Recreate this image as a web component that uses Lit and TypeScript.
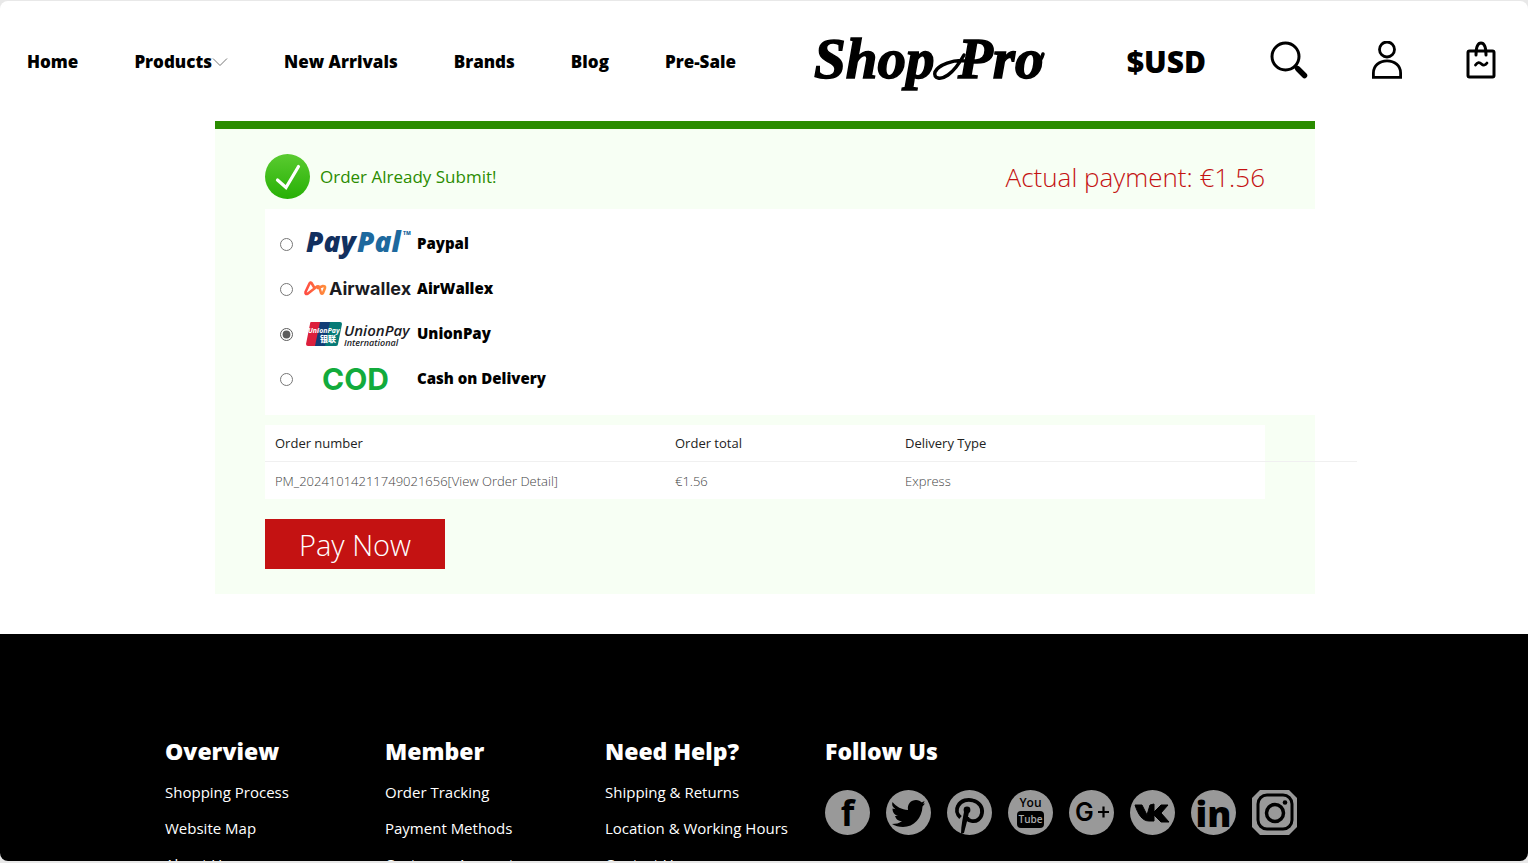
import { LitElement, html, css, svg } from "lit";
import { customElement, state } from "lit/decorators.js";

const chevron = html`<svg class="chevron" width="16" height="10" viewBox="0 0 16 10" aria-hidden="true"><path d="M1 1.5 8 8.5 15 1.5" fill="none" stroke="#777"/></svg>`;

const logo = html`<svg width="234" height="80" viewBox="0 -4 234 80" role="img" aria-label="Shop Pro">
  <g font-family="'Liberation Serif', serif" font-weight="700" font-style="italic" font-size="57" stroke="#000" stroke-width="1.500">
    <text x="2" y="52">Shop</text>
    <text x="146" y="52">Pro</text>
  </g>
  <path d="M154 35C142 33 126 39 123 46c-2 7 6 8 13 3 7-5 11-11 16-20" fill="none" stroke="#000" stroke-width="3.500" stroke-linecap="round"/>
  <path d="M224 37c4-1 6-5 7-9" fill="none" stroke="#000" stroke-width="3.500" stroke-linecap="round"/>
</svg>`;

const searchIcon = html`<svg width="38" height="38" viewBox="0 0 38 38"><circle cx="15.500" cy="15.500" r="13.500" fill="none" stroke="#000" stroke-width="3"/><path d="m25 25 3 3" stroke="#000" stroke-width="4"/><path d="m28 28 6.500 6.500" stroke="#000" stroke-width="5.500" stroke-linecap="round"/></svg>`;
const userIcon = html`<svg width="30" height="38" viewBox="0 0 30 38"><circle cx="15" cy="8.500" r="7.500" fill="none" stroke="#000" stroke-width="2.800"/><path d="M1.400 36.300V32C1.400 24.500 7.500 19.800 15 19.800S28.600 24.500 28.600 32v4.300z" fill="none" stroke="#000" stroke-width="2.800"/></svg>`;
const bagIcon = html`<svg width="30" height="38" viewBox="0 0 30 38"><rect x="2" y="10" width="26" height="26" rx="1.500" fill="none" stroke="#000" stroke-width="3"/><path d="M10 14C10 6 12 2 15 2s5 4 5 12" fill="none" stroke="#000" stroke-width="3" stroke-linecap="round"/><path d="M9.500 24c2-3 4-3 6-1s4 1 5.500-1" fill="none" stroke="#000" stroke-width="2.800" stroke-linecap="round"/></svg>`;

const payPal = html`<svg width="110" height="45" viewBox="0 -4 110 45" aria-hidden="true">
  <g font-family="'Open Sans', sans-serif" font-weight="800" font-style="italic" font-size="28">
    <text x="4" y="26" fill="#12305f">Pay</text><text x="55" y="26" fill="#1d699e">Pal</text>
  </g>
  <text x="101" y="9" font-family="'Open Sans', sans-serif" font-size="5" fill="#1d699e">TM</text>
</svg>`;
const airwallex = html`<svg width="110" height="45" viewBox="0 -4 110 45" aria-hidden="true">
  <defs><linearGradient id="aw"><stop offset="0" stop-color="#ff4b42"/><stop offset="1" stop-color="#ff8e3c"/></linearGradient></defs>
  <path d="M12.500 17 9.500 12Q8.500 11 7.500 12.500L3.500 21Q3 24 6 22.500L15 15.500Q17 14.500 17.500 17L19 22Q20 23.500 21 22L23 17Q23.500 15 21 15L16 17" fill="none" stroke="url(#aw)" stroke-width="2.600" stroke-linejoin="round" stroke-linecap="round"/>
  <text x="27" y="24" font-family="Inter, sans-serif" font-weight="700" font-size="18" fill="#1b1b1f">Airwallex</text>
</svg>`;
const unionPay = html`<svg width="110" height="45" viewBox="0 -4 110 45" aria-hidden="true">
  <path d="M9 6h13l-5 24H6q-2 0-2-2L8 8q0-2 1-2z" fill="#dc1f3c"/>
  <path d="M18 6h12l-5 24H13z" fill="#123d76"/>
  <path d="M28 6h10q2 0 2 2l-4 20q0 2-2 2H23z" fill="#067a76"/>
  <text x="6" y="17" font-family="'Noto Sans', sans-serif" font-weight="700" font-style="italic" font-size="7" fill="#fff">UnionPay</text>
  <text x="18" y="26" font-family="'Noto Sans CJK SC', sans-serif" font-weight="900" font-size="8" fill="#fff">银联</text>
  <g font-family="'Open Sans', sans-serif" font-style="italic" font-weight="600" fill="#1b1b1f">
    <text x="42" y="20" font-size="15">UnionPay</text>
    <text x="42" y="30" font-size="9">International</text>
  </g>
</svg>`;
const cod = html`<svg width="110" height="45" viewBox="0 -4 110 45" aria-hidden="true"><text x="20" y="29" font-family="Inter, sans-serif" font-weight="700" font-size="30" fill="#12ab3c">COD</text></svg>`;

const checkIcon = html`<svg width="45" height="45" viewBox="0 0 45 45" aria-hidden="true">
  <defs><linearGradient id="ok" x2="0" y2="1"><stop offset="0" stop-color="#5acb30"/><stop offset="1" stop-color="#27b005"/></linearGradient></defs>
  <circle cx="22.500" cy="22.500" r="22.500" fill="url(#ok)"/>
  <path d="M12.500 26 21 33.500 33.500 12.500" fill="none" stroke="#fff" stroke-width="3.200" stroke-linecap="round"/>
</svg>`;

const disc = svg`<circle cx="22.500" cy="22.500" r="22.500" fill="#999"/>`;
const social = [
  { name: "Facebook", art: svg`${disc}<text x="22.500" y="36" text-anchor="middle" font-family="'Open Sans', sans-serif" font-weight="700" font-size="35">f</text>` },
  { name: "Twitter", art: svg`${disc}<path d="M6.500 12c4 5 9 7.500 15.500 8-1-6 3-10 8-10 2.500 0 4.500 1 5.500 2.300 1 0 2-.8 3-1.300-.3 1.400-.7 2-1.500 2.700l2-.2-2.500 3C36 28 28 37 17 37c-4 0-8-1-11-3 4 0 7-.6 10-3-4 0-6-2-7-5h3c-4-1.500-5.500-4-5.500-7.500l3 .8C6.500 17 5.500 15 6.500 12z"/>` },
  { name: "Pinterest", art: svg`${disc}<path d="M13.500 27.500C9.500 24 9 19.500 11 16c3-6 10-7 15-5.500 6 1.500 10 6.500 9 12.500-1 6-5.500 9-10.500 8-3-.5-4.500-2.500-4.500-4" fill="none" stroke="#000" stroke-width="3.800"/><path d="M18 17h4c1 3-2 15-5 26l-3 1c0-9 2-17 4-27z"/><circle cx="20" cy="20" r="3.400"/>` },
  { name: "YouTube", art: svg`${disc}<g font-family="'Open Sans', sans-serif" font-weight="600" text-anchor="middle"><text x="22.500" y="17" font-size="12">You</text><rect x="9" y="21" width="27" height="17" rx="4"/><text x="22.500" y="33" font-size="10" fill="#aaa">Tube</text></g>` },
  { name: "Google Plus", art: svg`${disc}<text x="6" y="31" font-family="Inter, sans-serif" font-weight="600" font-size="25">G</text><path d="M29 22h11M34.500 16.500v11" stroke="#000" stroke-width="2.200"/>` },
  { name: "VK", art: svg`${disc}<path d="M5 15h7l5 10 3-10 4-1v8l7-7h7l-7 8 8 9h-8l-7-7v6h-5C12 31 8 24 5 15z" stroke="#000" stroke-linejoin="round"/>` },
  { name: "LinkedIn", art: svg`${disc}<text x="22.500" y="37" text-anchor="middle" font-family="'Open Sans', sans-serif" font-weight="800" font-size="36">in</text>` },
  { name: "Instagram", art: svg`<path d="M8 0h29l8 8v29l-8 8H8l-8-8V8z" fill="#999"/><rect x="6" y="5" width="34" height="34" rx="9" fill="none" stroke="#000" stroke-width="3"/><circle cx="23" cy="23" r="8.500" fill="none" stroke="#000" stroke-width="3.500"/><circle cx="33" cy="12.500" r="2.300"/>` },
];

const methods = [
  { id: "paypal", label: "Paypal", mark: payPal },
  { id: "airwallex", label: "AirWallex", mark: airwallex },
  { id: "unionpay", label: "UnionPay", mark: unionPay },
  { id: "cod", label: "Cash on Delivery", mark: cod },
];

const footerColumns = [
  { title: "Overview", links: ["Shopping Process", "Website Map", "About Us"] },
  { title: "Member", links: ["Order Tracking", "Payment Methods", "Customer Account"] },
  { title: "Need Help?", links: ["Shipping & Returns", "Location & Working Hours", "Contact Us"] },
];

@customElement("app-root")
export class AppRoot extends LitElement {
  @state() private method = "unionpay";

  static styles = css`
    :host {
      display: block;
      box-sizing: border-box;
      height: 100vh;
      padding: 1px 0 2px;
      background: #e8e8e8;
      font-family: "Open Sans", "Noto Sans", sans-serif;
      font-weight: 400;
      color: #000;
    }
    * { box-sizing: border-box; }
    a { color: inherit; text-decoration: none; }
    svg { display: block; }
    .page { height: 100%; overflow: hidden; border-radius: 8px; background: #fff; }
    .header { display: flex; align-items: center; height: 120px; padding: 2px 32px 0 27px; }
    .nav { display: flex; gap: 56px; font-size: 17px; font-weight: 800; line-height: 24px; white-space: nowrap; }
    .nav a { display: flex; align-items: center; }
    .logo { margin-left: 76px; }
    .tools { display: flex; flex: 1; align-items: center; justify-content: flex-end; gap: 64px; }
    .tools svg { margin-bottom: 4px; }
    .tool { padding: 0; border: 0; background: none; font: inherit; color: inherit; }
    .currency { font-size: 30px; font-weight: 800; line-height: 40px; }
    .content { padding-left: 2px; }
    .panel { width: 1100px; max-width: 100%; margin: 0 auto 40px; padding: 25px 0 25px 50px; border-top: 8px solid #2a8c00; background: #f7fff4; }
    .status { display: flex; align-items: center; gap: 10px; padding-right: 50px; }
    .done { flex: 1; margin: 0; font-size: 17px; font-weight: 400; color: #2a8c00; }
    .due { margin: 0; font-size: 26px; font-weight: 350; line-height: 40px; color: #c41212; }
    .methods { margin: 10px 0; padding: 13px 15px; border: 0; background: #fff; }
    .method { display: flex; align-items: center; height: 45px; font-size: 15px; font-weight: 800; }
    .method input { width: 13px; height: 13px; margin: 0 9px 0 0; accent-color: #5c5c5c; }
    .method span { margin-left: 5px; padding-bottom: 4px; }
    .order { width: 1000px; margin-bottom: 20px; background: #fff; font-size: 13px; }
    .order table { width: 1092px; border-collapse: collapse; table-layout: fixed; text-align: left; }
    .order th, .order td { padding: 1px 10px 0; font-weight: 400; color: #222; }
    .order th { height: 36px; border-bottom: 1px solid #f0f0f0; }
    .order td { height: 38px; font-weight: 350; color: #444; }
    .order .number { width: 400px; }
    .order .total { width: 230px; }
    .pay { display: block; width: 180px; height: 50px; padding: 1px 0 0; border: 0; background: #c41212; color: #fff; font: inherit; font-size: 29px; font-weight: 350; }
    .footer { min-height: 400px; padding: 99px 0 40px 2px; background: #000; color: #fff; }
    .columns { display: grid; grid-template-columns: 220px 220px 220px 1fr; width: 1200px; max-width: 100%; margin: 0 auto; }
    .columns h2 { margin: 0 0 5px; font-size: 23px; font-weight: 800; line-height: 36px; }
    .links { margin: 0; padding: 0; list-style: none; font-size: 15px; line-height: 36px; white-space: nowrap; }
    .social { display: flex; gap: 16px; padding-top: 16px; }
  `;

  render() {
    return html`<div class="page">
      <header class="header">
        <nav class="nav" aria-label="Main">
          <a href="#home">Home</a>
          <a href="#products">Products${chevron}</a>
          <a href="#new">New Arrivals</a>
          <a href="#brands">Brands</a>
          <a href="#blog">Blog</a>
          <a href="#presale">Pre-Sale</a>
        </nav>
        <a class="logo" href="#home">${logo}</a>
        <div class="tools">
          <button class="tool currency">$USD</button>
          <button class="tool" aria-label="Search">${searchIcon}</button>
          <a href="#account" aria-label="Account">${userIcon}</a>
          <a href="#cart" aria-label="Cart">${bagIcon}</a>
        </div>
      </header>
      <div class="content">
        <main class="panel">
          <div class="status">
            ${checkIcon}
            <h1 class="done">Order Already Submit!</h1>
            <p class="due">Actual payment: €1.56</p>
          </div>
          <fieldset class="methods" aria-label="Payment method">
            ${methods.map((m) => html`<label class="method">
              <input type="radio" name="method" .checked=${this.method === m.id} @change=${() => (this.method = m.id)}>
              ${m.mark}<span>${m.label}</span>
            </label>`)}
          </fieldset>
          <div class="order">
            <table>
              <thead><tr><th class="number">Order number</th><th class="total">Order total</th><th>Delivery Type</th></tr></thead>
              <tbody><tr><td>PM_20241014211749021656<a href="#order">[View Order Detail]</a></td><td>€1.56</td><td>Express</td></tr></tbody>
            </table>
          </div>
          <button class="pay">Pay Now</button>
        </main>
      </div>
      <footer class="footer">
        <div class="columns">
          ${footerColumns.map((c) => html`<section>
            <h2>${c.title}</h2>
            <ul class="links">${c.links.map((l) => html`<li><a href="#help">${l}</a></li>`)}</ul>
          </section>`)}
          <section>
            <h2>Follow Us</h2>
            <div class="social">
              ${social.map((s) => html`<a href="#social" aria-label=${s.name}><svg width="45" height="45" viewBox="0 0 45 45">${s.art}</svg></a>`)}
            </div>
          </section>
        </div>
      </footer>
    </div>`;
  }
}
